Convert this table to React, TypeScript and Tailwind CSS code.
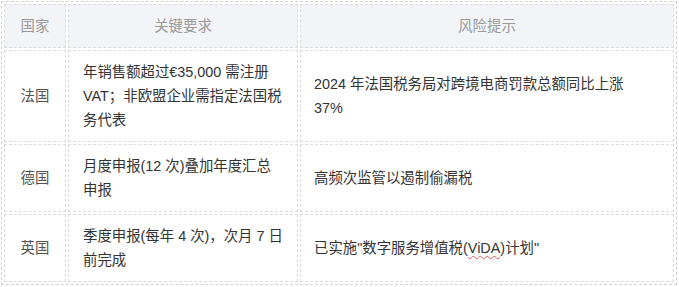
const rows = [
  {
    country: "法国",
    requirement: "年销售额超过€35,000 需注册 VAT；非欧盟企业需指定法国税务代表",
    risk: "2024 年法国税务局对跨境电商罚款总额同比上涨 37%",
  },
  {
    country: "德国",
    requirement: "月度申报(12 次)叠加年度汇总申报",
    risk: "高频次监管以遏制偷漏税",
  },
  {
    country: "英国",
    requirement: "季度申报(每年 4 次)，次月 7 日前完成",
    risk: null,
  },
];

export default function App() {
  return (
    <div className="bg-white w-[679px] h-[287px] pl-px pt-px font-['Liberation_Sans','Noto_Sans_CJK_SC',sans-serif] text-[14.4px] leading-6">
      <table className="table-fixed w-[676px] border border-dashed border-[#d4d4d4] border-separate border-spacing-[2px]">
        <colgroup>
          <col className="w-[62px]" />
          <col className="w-[230px]" />
          <col className="w-[374px]" />
        </colgroup>
        <thead>
          <tr>
            <th className="bg-[#f3f4f8] border border-dashed border-[#dcdcdc] py-[9px] px-2 font-normal text-[#9a9a9a] text-center">
              国家
            </th>
            <th className="bg-[#f3f4f8] border border-dashed border-[#dcdcdc] py-[9px] px-2 font-normal text-[#9a9a9a] text-center">
              关键要求
            </th>
            <th className="bg-[#f3f4f8] border border-dashed border-[#dcdcdc] py-[9px] px-2 font-normal text-[#9a9a9a] text-center">
              风险提示
            </th>
          </tr>
        </thead>
        <tbody className="text-[#333]">
          {rows.map((row) => (
            <tr key={row.country}>
              <td className="border border-dashed border-[#dcdcdc] py-[9px] px-2 text-center align-middle text-[#555]">
                {row.country}
              </td>
              <td className="border border-dashed border-[#dcdcdc] py-[9px] pl-[14px] pr-[12.5px] align-middle">
                {row.requirement}
              </td>
              <td className="border border-dashed border-[#dcdcdc] py-[9px] pl-[13px] pr-[30px] align-middle">
                {row.risk ?? (
                  <>
                    已实施"数字服务增值税(
                    <span className="underline decoration-wavy decoration-[#e05a5a] decoration-1 underline-offset-2">
                      ViDA
                    </span>
                    )计划"
                  </>
                )}
              </td>
            </tr>
          ))}
        </tbody>
      </table>
    </div>
  );
}
